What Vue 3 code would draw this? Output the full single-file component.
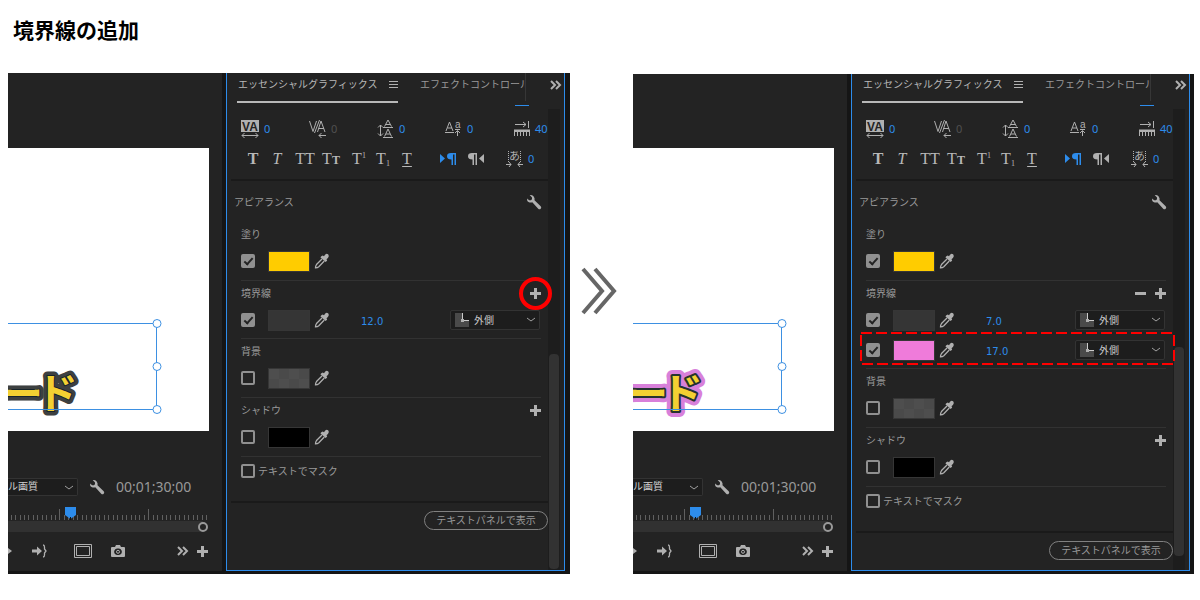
<script setup>
const ticks = Array.from({ length: 46 }, (_, k) => ({
  x: 198 - Math.round((k * 444) / 100) + 0.5,
  tall: k === 13 || k === 33
}))

const shots = [
  { id: 'before', strokes: [{ color: 'dark', width: '12.0' }], added: false },
  {
    id: 'after',
    strokes: [
      { color: 'dark', width: '7.0' },
      { color: 'pink', width: '17.0', marked: true }
    ],
    added: true
  }
]
</script>

<template>
  <main class="page">
    <h1>境界線の追加</h1>
    <div class="compare">
      <template v-for="shot in shots" :key="shot.id">
        <svg v-if="shot.added" class="next" viewBox="0 0 36 48" aria-hidden="true">
          <path d="M2 2L21 24L2 46M14 2L33 24L14 46" />
        </svg>

        <section class="shot" :class="shot.id">
          <div class="monitor">
            <svg class="canvas" aria-hidden="true">
              <g class="telop">
                <g class="outer"><text x="-7" y="261">ー</text><text x="28" y="261">ド</text></g>
                <g class="inner"><text x="-7" y="261">ー</text><text x="28" y="261">ド</text></g>
                <g class="face"><text x="-7" y="261">ー</text><text x="28" y="261">ド</text></g>
              </g>
              <g class="frame">
                <path d="M-2 175.500H148.500V261.500H-2" />
                <circle cx="149" cy="175.500" r="4" />
                <circle cx="149" cy="218.500" r="4" />
                <circle cx="149" cy="261.500" r="4" />
              </g>
            </svg>

            <div class="status">
              <span class="quality">
                <select aria-label="再生時の解像度"><option>ル画質</option></select>
                <svg class="chev" viewBox="0 0 10 6"><path d="M1 1L5 4L9 1" /></svg>
              </span>
              <button class="icon" aria-label="設定">
                <svg width="16" height="16" viewBox="0 0 16 16"><path class="solid" d="M1 4.500Q.7 6.800 2.500 8Q4.500 9 6.300 8.300L12.200 14.700Q13.500 16 14.700 14.700Q15.800 13.500 14.700 12.200L8.500 6.300Q9.100 4 7.500 2.200Q6 .6 3.700 1L6 3.500V5.200L4.900 6.200H3.200Z" /></svg>
              </button>
              <output class="timecode">00;01;30;00</output>
            </div>

            <div class="timeline">
              <svg class="ruler" aria-hidden="true">
                <path v-for="t in ticks" :key="t.x" :d="`M${t.x} ${t.tall ? 3 : 9}V14`" />
                <path class="playhead" d="M57 1H68V9L62.500 13L57 9Z" />
                <path class="needle" d="M62.500 11V14" />
              </svg>
              <div class="zoombar"><i></i></div>
            </div>

            <div class="transport">
              <button class="icon play" aria-label="再生"><svg width="5" height="8" viewBox="0 0 5 8"><path class="solid" d="M0 1L4 4L0 7Z" /></svg></button>
              <button class="icon out" aria-label="アウトへ移動"><svg width="16" height="14" viewBox="0 0 16 14"><path class="solid" d="M0 5.500H5V2.500L10 7L5 11.500V8.500H0Z" /><path class="line heavy" d="M11 1Q12.500 1 12.500 3V5L14 7L12.500 9V11Q12.500 13 11 13" /></svg></button>
              <button class="icon safe" aria-label="セーフマージン"><svg width="18" height="14" viewBox="0 0 18 14"><path class="line" d="M.5.500H17.500V13.500H.5ZM2.500 2.500H15.500V11.500H2.500Z" /></svg></button>
              <button class="icon camera" aria-label="フレームを書き出し"><svg width="14" height="13" viewBox="0 0 14 13"><path class="solid" fill-rule="evenodd" d="M0 3Q0 2 1 2H4L5 0H9L10 2H13Q14 2 14 3V11Q14 12 13 12H1Q0 12 0 11ZM7 3.500A3.300 3.300 0 1 0 7 10A3.300 3.300 0 1 0 7 3.500Z" /><circle class="line" cx="7" cy="6.800" r="1.500" /></svg></button>
              <button class="icon more" aria-label="その他"><svg width="12" height="10" viewBox="0 0 12 10"><path class="line bold" d="M1 1L5 5L1 9M6 1L10 5L6 9" /></svg></button>
              <button class="icon" aria-label="追加"><svg width="11" height="11" viewBox="0 0 11 11"><path class="solid" d="M4 0H7V4H11V7H7V11H4V7H0V4H4Z" /></svg></button>
            </div>
          </div>

          <div class="panel">
            <nav class="tabs">
              <button class="tab active">エッセンシャルグラフィックス
                <svg width="9" height="8" viewBox="0 0 9 8"><path class="line" d="M0 .5H9M0 3.500H9M0 6.500H9" /></svg>
              </button>
              <button class="tab other">エフェクトコントロール</button>
              <button class="icon overflow" aria-label="他のタブ"><svg width="12" height="10" viewBox="0 0 12 10"><path class="line bold" d="M1 1L5 5L1 9M6 1L10 5L6 9" /></svg></button>
            </nav>

            <div class="body">
              <div class="content">
                <div class="metrics">
                  <div class="metric">
                    <svg width="19" height="18" viewBox="0 0 19 18"><path class="solid" d="M0 0H18V12H0Z" /><text class="knock" x="9" y="11" text-anchor="middle">VA</text><path class="line" d="M1 15.500H17M3.500 13L1 15.500L3.500 18M14.500 13L17 15.500L14.500 18" /></svg>
                    <button>0</button>
                  </div>
                  <div class="metric off">
                    <svg width="18" height="18" viewBox="0 0 18 18"><path class="line" d="M.5 1L4 11.500L7.500 1M10.500 0L5.500 13M8.500 12L12 1L16 12M9.500 8.500H15M10 15.500H17M12.500 13L10 15.500L12.500 18" /></svg>
                    <button>0</button>
                  </div>
                  <div class="metric">
                    <svg width="18" height="18" viewBox="0 0 18 18"><path class="line" d="M3.500 5V16M1 7.500L3.500 5L6 7.500M1 13.500L3.500 16L6 13.500M6 7.500H16M6 17.500H16M7.500 6.500L11 0L14.500 6.500M9 4.500H13M7.500 16.500L11 9L14.500 16.500M9 14H13" /></svg>
                    <button>0</button>
                  </div>
                  <div class="metric">
                    <svg width="18" height="18" viewBox="0 0 18 18"><path class="line" d="M0 12.500H9M1 11L4.500 2L8 11M2.500 8H7M10 9.500H15M12.500 16V11M10 13L12.500 10.500L15 13" /><text x="10" y="8" class="small-a">a</text></svg>
                    <button>0</button>
                  </div>
                  <div class="metric">
                    <svg width="18" height="16" viewBox="0 0 18 16"><path class="line" d="M2 3.500H13M10 1L13 3.500L10 6M15.500 0V7" /><path class="solid" d="M1 8.500H17V15H16V11H14V15H13V11H11V15H10V11H8V15H7V11H5V15H4V11H2V15H1Z" /></svg>
                    <button>40</button>
                  </div>
                </div>

                <div class="styles">
                  <button class="glyph b">T</button>
                  <button class="glyph i">T</button>
                  <button class="glyph pair">TT</button>
                  <button class="glyph caps">T<small>T</small></button>
                  <button class="glyph sup">T<sup>1</sup></button>
                  <button class="glyph sub">T<sub>1</sub></button>
                  <button class="glyph u">T</button>
                  <button class="icon dir on" aria-label="左から右"><svg width="18" height="14" viewBox="0 0 18 14"><path class="solid" d="M1 2L6 6.500L1 11ZM12 1H17V13H15.500V2.500H14V13H12.500V7.500Q8 7.500 8 4.200Q8 1 12 1Z" /></svg></button>
                  <button class="icon rtl" aria-label="右から左"><svg width="18" height="14" viewBox="0 0 18 14"><path class="solid" d="M17 2L12 6.500L17 11ZM5 1H10V13H8.500V2.500H7V13H5.500V7.500Q1 7.500 1 4.200Q1 1 5 1Z" /></svg></button>
                  <div class="metric tsume">
                    <svg width="18" height="18" viewBox="0 0 18 18"><path class="line dots" d="M2.500 1V12M14.500 1V12" /><text x="3" y="10" class="kana">あ</text><path class="line" d="M0 14.500H5M3 12L5 14.500L3 17M17 14.500H12M14 12L12 14.500L14 17" /></svg>
                    <button>0</button>
                  </div>
                </div>

                <div class="appearance">
                  <h2>アピアランス</h2>
                  <button class="icon" aria-label="グラフィックプロパティ">
                    <svg width="16" height="16" viewBox="0 0 16 16"><path class="solid" d="M1 4.500Q.7 6.800 2.500 8Q4.500 9 6.300 8.300L12.200 14.700Q13.500 16 14.700 14.700Q15.800 13.500 14.700 12.200L8.500 6.300Q9.100 4 7.500 2.200Q6 .6 3.700 1L6 3.500V5.200L4.900 6.200H3.200Z" /></svg>
                  </button>
                </div>

                <section
                  v-for="group in [
                    { name: '塗り', rows: [{ color: 'yellow', on: true }] },
                    { name: '境界線', rows: shot.strokes.map(s => ({ ...s, on: true })), stroke: true },
                    { name: '背景', rows: [{ color: 'checker' }] },
                    { name: 'シャドウ', rows: [{ color: 'black' }], plus: true }
                  ]"
                  :key="group.name"
                  class="group"
                  :class="{ stroke: group.stroke }"
                >
                  <header>
                    <h3>{{ group.name }}</h3>
                    <button v-if="group.stroke && shot.added" class="icon" aria-label="削除"><svg width="11" height="11" viewBox="0 0 11 11"><path class="solid" d="M0 4H11V7H0Z" /></svg></button>
                    <button v-if="group.stroke || group.plus" class="icon plus" aria-label="追加">
                      <svg width="11" height="11" viewBox="0 0 11 11"><path class="solid" d="M4 0H7V4H11V7H7V11H4V7H0V4H4Z" /></svg>
                      <span v-if="group.stroke && !shot.added" class="ring"></span>
                    </button>
                  </header>
                  <div v-for="(row, n) in group.rows" :key="n" class="row">
                    <input type="checkbox" :checked="row.on" :aria-label="group.name" />
                    <button class="swatch" :class="row.color" :aria-label="group.name + 'のカラー'"></button>
                    <button class="icon dropper" aria-label="スポイト">
                      <svg width="16" height="16" viewBox="0 0 16 16"><path class="solid" d="M7 3.500L8.700 2.500L10 3.200Q11.200 1.300 12.500 .8Q15 .8 14.700 3.500Q14.200 5.200 12.500 6.200L13.200 7.500L11.700 9L6.500 4.500Z" /><path class="line heavy" d="M8 6L2.500 11.500Q1.500 13 1.500 14.800Q3.500 14.800 4.800 13.700L10.300 8" /></svg>
                    </button>
                    <template v-if="row.width">
                      <button class="width">{{ row.width }}</button>
                      <span class="place">
                        <svg class="corner" width="14" height="14" viewBox="0 0 14 14"><path class="back" d="M0 0H14V14H0Z" /><path class="cut" d="M8 0H14V7H8Z" /><path class="line" d="M7.500 0V7.500H14" /><path class="solid" d="M6 6H9V9H6Z" /></svg>
                        <select aria-label="線の位置"><option>外側</option></select>
                        <svg class="chev" viewBox="0 0 10 6"><path d="M1 1L5 4L9 1" /></svg>
                      </span>
                    </template>
                    <svg v-if="row.marked" class="marker" aria-hidden="true"><rect x="1" y="1" width="313" height="31" /></svg>
                  </div>
                </section>

                <label class="mask"><input type="checkbox" /><span>テキストでマスク</span></label>
                <div class="footer"><button>テキストパネルで表示</button></div>
              </div>
              <div class="scroll"><i></i></div>
            </div>
          </div>
        </section>
      </template>
    </div>
  </main>
</template>

<style>
body {
  background: #fff;
}
</style>

<style scoped>
.page {
  padding: 16px 5px 26px 8px;
  font: 10px/16px "Liberation Sans", "Noto Sans CJK JP", sans-serif;
  color: #999;
}
h1, h2, h3 {
  margin: 0;
  font-weight: 400;
}
h1 {
  margin: 0 0 31px 5px;
  font: 700 21px/26px "Noto Sans CJK JP", sans-serif;
  color: #000;
}
h2, h3 {
  padding-top: 2px;
  font-size: 10px;
}
button, select {
  margin: 0;
  padding: 0;
  border: 0;
  background: none;
  font: inherit;
  color: inherit;
}
svg {
  display: block;
}
.solid {
  fill: #b0b0b0;
}
.line {
  fill: none;
  stroke: #b0b0b0;
  stroke-width: 1;
}
.line.heavy {
  stroke-width: 1.3;
}
.line.bold {
  stroke-width: 2;
}
.icon {
  flex: none;
  display: block;
}
.compare {
  display: grid;
  grid-template-columns: 1fr 63px 1fr;
  align-items: start;
}
.next {
  width: 36px;
  height: 48px;
  margin: 194px 0 0 11px;
}
.next path {
  fill: none;
  stroke: #666;
  stroke-width: 4;
}
.shot {
  display: flex;
  gap: 4px;
  padding: 0 5px 3px 0;
  background: #151515;
}
.shot.after {
  clip-path: inset(1px 1px 0 0);
}

/* Program monitor */
.monitor {
  flex: 1;
  min-width: 0;
  padding-top: 75px;
  background: #232323;
}
.canvas {
  width: calc(100% - 13px);
  height: 283px;
  background: #fff;
  overflow: hidden;
}
.telop {
  font: 700 42px "Noto Sans CJK JP", sans-serif;
  stroke-linejoin: round;
}
.outer {
  fill: #3d4041;
  stroke: #3d4041;
  stroke-width: 9;
}
.inner {
  fill: #16242c;
  stroke: #16242c;
  stroke-width: 2;
}
.face {
  fill: #f3d032;
}
.after .outer {
  fill: #d880da;
  stroke: #d880da;
  stroke-width: 12;
}
.after .inner {
  fill: #25332f;
  stroke: #25332f;
  stroke-width: 4;
}
.frame path {
  fill: none;
  stroke: #3d90e2;
}
.frame circle {
  fill: #fff;
  stroke: #3d90e2;
}
.status {
  display: flex;
  align-items: center;
  height: 20px;
  margin-top: 46px;
}
.quality {
  position: relative;
  width: 70px;
  margin-right: 11px;
}
.quality select {
  display: block;
  box-sizing: border-box;
  width: 100%;
  height: 18px;
  border: 1px solid #333;
  border-left: 0;
  border-radius: 0 2px 2px 0;
  background: #1d1d1d;
  color: #d0d0d0;
  appearance: none;
}
.chev {
  position: absolute;
  right: 4px;
  top: 7px;
  width: 10px;
  height: 6px;
  pointer-events: none;
}
.chev path {
  fill: none;
  stroke: #a0a0a0;
}
.timecode {
  margin-left: 11px;
  font: 14px/20px "Noto Sans", sans-serif;
  color: #999;
}
.timeline {
  margin-top: 9px;
}
.ruler {
  width: 100%;
  height: 15px;
}
.ruler path {
  stroke: #606060;
}
.ruler .playhead {
  fill: #2d8ceb;
  stroke: none;
}
.ruler .needle {
  stroke: #111;
}
.zoombar {
  display: flex;
  align-items: center;
  justify-content: flex-end;
  width: 200px;
  height: 11px;
  background: linear-gradient(90deg, #313131 195px, #232323 195px);
}
.zoombar i {
  box-sizing: border-box;
  width: 10px;
  height: 10px;
  border: 2px solid #999;
  border-radius: 50%;
  background: #232323;
}
.transport {
  display: flex;
  align-items: center;
  height: 38px;
  padding-right: 14px;
}
.out {
  margin-left: 19px;
}
.safe {
  margin-left: 26px;
}
.camera {
  margin-left: 19px;
}
.more {
  margin: 0 8px 0 auto;
}

/* Essential graphics panel */
.panel {
  box-sizing: border-box;
  flex: none;
  width: 339px;
  border: 1px solid #2d8ceb;
  border-top: 0;
  background: #232323;
}
.tabs {
  position: relative;
  display: flex;
  align-items: flex-start;
  height: 36px;
  padding: 0 2px 0 10px;
}
.tabs::after {
  content: "";
  position: absolute;
  right: 35px;
  bottom: 3px;
  width: 14px;
  height: 1px;
  background: #2d8ceb;
}
.tab {
  height: 28px;
  padding-bottom: 4px;
  line-height: 24px;
  text-align: left;
  white-space: nowrap;
}
.tab.active {
  display: flex;
  align-items: center;
  justify-content: space-between;
  box-sizing: border-box;
  width: 161px;
  height: 30px;
  padding-left: 1px;
  border-bottom: 2px solid #b8b8b8;
  color: #b8b8b8;
}
.tab.other {
  box-sizing: border-box;
  flex: 1;
  min-width: 0;
  margin-left: 22px;
  border-right: 1px solid #363636;
  overflow: hidden;
}
.overflow {
  margin: 7px 0 0 24px;
}
.body {
  display: flex;
  padding-right: 4px;
}
.content {
  flex: 1;
  min-width: 0;
  padding-left: 4px;
}
.scroll {
  box-sizing: border-box;
  display: flex;
  flex-direction: column;
  justify-content: flex-end;
  width: 12px;
  padding: 0 1px 1px;
  background: #1d1d1d;
}
.scroll i {
  height: 215px;
  border-radius: 4px;
  background: #323232;
}
.after .scroll {
  padding-bottom: 14px;
}
.after .scroll i {
  height: 209px;
}
.metrics {
  display: grid;
  grid-template-columns: repeat(5, 68px);
  height: 34px;
  margin: 3px -30px 0 10px;
}
.metric {
  display: flex;
  align-items: center;
  gap: 4px;
  font: 11px/16px "Noto Sans", sans-serif;
  color: #2d8ceb;
}
.metric.off {
  color: #505050;
}
.metric text {
  fill: #b0b0b0;
}
.metric .knock {
  font: 700 12px "Liberation Sans", sans-serif;
  fill: #232323;
}
.metric .small-a {
  font: 10px "Liberation Sans", sans-serif;
}
.metric .kana {
  font: 11px "Noto Sans CJK JP", sans-serif;
}
.dots {
  stroke-dasharray: 1 1;
}
.styles {
  display: flex;
  align-items: center;
  height: 26px;
  padding: 0 0 7px 14px;
  border-bottom: 2px solid #1a1a1a;
}
.glyph {
  flex: none;
  width: 16px;
  height: 18px;
  margin-right: 8px;
  font: 16px/18px "Liberation Serif", serif;
  color: #b8b8b8;
  white-space: nowrap;
}
.b {
  font-weight: 700;
}
.i {
  margin-right: 10px;
  font-style: italic;
}
.pair {
  width: 20px;
  margin-right: 6px;
}
.caps {
  width: 20px;
  margin-right: 10px;
}
.caps small {
  font-size: 12px;
  font-weight: 700;
}
.glyph sup, .glyph sub {
  font-size: 8px;
  line-height: 8px;
}
.glyph sub {
  vertical-align: -2px;
}
.u {
  margin-right: 24px;
  text-decoration: underline;
  text-underline-offset: 2px;
}
.on .solid {
  fill: #2d8ceb;
}
.rtl {
  margin-left: 10px;
}
.tsume {
  margin-left: 21px;
}
.appearance {
  display: flex;
  align-items: center;
  justify-content: space-between;
  height: 41px;
  padding: 0 6px 0 3px;
}
.group {
  margin: 0 7px 0 10px;
  padding-bottom: 4px;
  border-bottom: 1px solid #323232;
}
.group.stroke {
  padding-bottom: 3px;
}
.group header {
  display: flex;
  align-items: center;
  gap: 9px;
  height: 24px;
}
.group h3 {
  flex: 1;
}
.plus {
  position: relative;
}
.ring {
  position: absolute;
  inset: -11px;
  border: 4px solid #f00;
  border-radius: 50%;
}
.row {
  position: relative;
  display: flex;
  align-items: center;
  height: 30px;
}
input[type="checkbox"] {
  flex: none;
  display: grid;
  place-content: center;
  box-sizing: border-box;
  width: 14px;
  height: 14px;
  margin: 0;
  border: 2px solid #909090;
  border-radius: 2px;
  appearance: none;
}
input:checked {
  background: #909090;
}
input:checked::after {
  content: "";
  width: 3px;
  height: 7px;
  margin-bottom: 2px;
  border: solid #232323;
  border-width: 0 2px 2px 0;
  transform: rotate(42deg);
}
.swatch {
  flex: none;
  box-sizing: border-box;
  width: 42px;
  height: 21px;
  margin: 0 4px 0 13px;
  border: 1px solid #363636;
}
.yellow {
  background: #fc0;
}
.dark {
  background: #353535;
}
.pink {
  background: #ef7bda;
}
.black {
  background: #000;
}
.checker {
  background: repeating-conic-gradient(#4a4a4a 0 25%, #4e4e4e 0 50%) 0 0 / 20px 20px;
}
.width {
  padding-top: 3px;
  margin-left: 31px;
  font: 10px/16px "DejaVu Sans", sans-serif;
  color: #2d8ceb;
}
.place {
  position: relative;
  width: 90px;
  margin: 0 1px 0 auto;
}
.place select {
  display: block;
  box-sizing: border-box;
  width: 100%;
  height: 20px;
  padding: 1px 0 0 23px;
  border: 1px solid #333;
  border-radius: 2px;
  background: #1d1d1d;
  color: #c8c8c8;
  appearance: none;
}
.corner {
  position: absolute;
  left: 5px;
  top: 3px;
}
.back {
  fill: #4a4a4a;
}
.cut {
  fill: #1d1d1d;
}
.corner .line {
  stroke: #ccc;
}
.marker {
  position: absolute;
  left: -6px;
  top: -3px;
  width: 315px;
  height: 33px;
  pointer-events: none;
}
.marker rect {
  fill: none;
  stroke: #f00;
  stroke-width: 2;
  stroke-dasharray: 11 4;
}
.mask {
  display: flex;
  align-items: center;
  gap: 3px;
  height: 28px;
  margin-left: 10px;
}
.mask span {
  padding-top: 2px;
}
.footer {
  display: flex;
  justify-content: flex-end;
  margin-top: 16px;
  padding: 8px 0 40px;
  border-top: 2px solid #1a1a1a;
}
.after .footer {
  padding-bottom: 10px;
}
.footer button {
  box-sizing: border-box;
  width: 124px;
  height: 19px;
  border: 1px solid #808080;
  border-radius: 10px;
  line-height: 17px;
}
</style>
